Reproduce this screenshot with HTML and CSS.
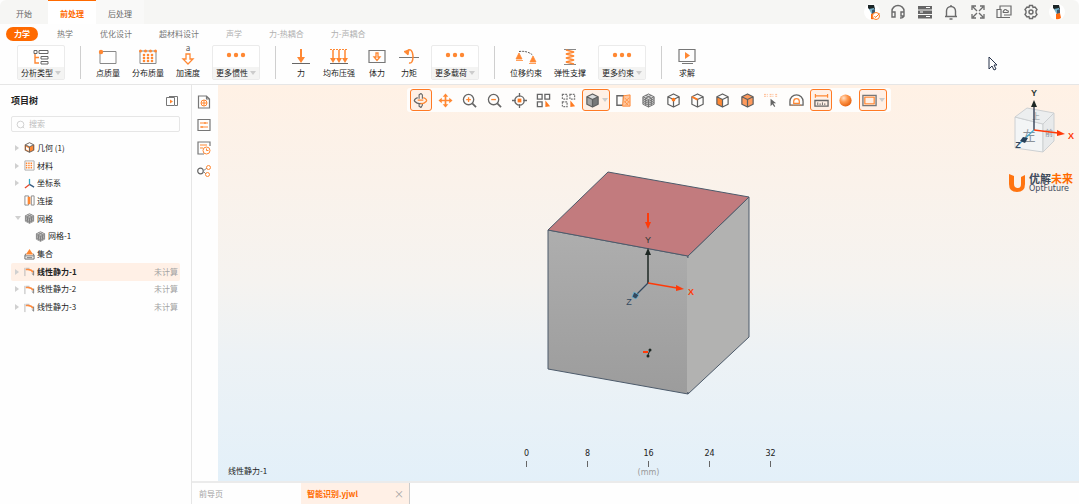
FILE: index.html
```html
<!DOCTYPE html>
<html lang="zh-CN">
<head>
  <meta charset="UTF-8" />
  <meta name="viewport" content="width=device-width, initial-scale=1.0" />
  <title>智能识别.yjwl</title>
  <link rel="stylesheet" href="styles.css">
</head>
<body>
  <svg class="sprite" aria-hidden="true">
    <symbol id="cube" viewBox="0 0 16 16">
      <path d="M8 1l6 3v8l-6 3-6-3V4zM2 4l6 3 6-3M8 7v8" fill="none" stroke="#606060" stroke-width="1.3" stroke-linejoin="round" />
    </symbol>
    <symbol id="mesh" viewBox="0 0 16 16">
      <path d="M8 1l6 3v8l-6 3-6-3V4z" fill="#d8d8d8" />
      <path d="M8 1l6 3v8l-6 3-6-3V4zM2 4l6 3 6-3M8 7v8M2 8l6 3 6-3M5 2.500l6 3V13M11 2.500l-6 3V13M2 10l6 3 6-3M2 6l6 3 6-3" fill="none" stroke="#707070" />
    </symbol>
    <symbol id="static" viewBox="0 0 12 12">
      <path d="M1 2v9M2 2.500h4" fill="none" stroke="#b5b5b5" />
      <path d="M2 4q6-1 8 3" fill="none" stroke="#ff8a3d" stroke-width="1.500" />
      <path d="M10.500 5v5M8.500 8l2 2" fill="none" stroke="#777" />
    </symbol>
    <symbol id="more" viewBox="0 0 20 18">
      <g fill="#ff8833"><circle cx="3" cy="7" r="2.200" /><circle cx="10" cy="7" r="2.200" /><circle cx="17" cy="7" r="2.200" /></g>
    </symbol>
    <symbol id="person" viewBox="0 0 16 16">
      <circle cx="8" cy="8" r="8" fill="#fff" />
      <path d="M4 1h6l1 4-5 1-2-2z" fill="#1b2526" />
      <path d="M5 5l5-1 1 5-3 2z" fill="#78b4cc" />
      <path d="M8 6l3-1v4l-3 1z" fill="#3d5a70" />
      <path d="M7 10l4-1 1 5q-3 2-5 1z" fill="#ff6a10" />
    </symbol>
  </svg>

  <header class="app-header">
    <div class="title-bar">
      <nav class="main-tabs">
        <a href="#">开始</a>
        <a href="#" class="active">前处理</a>
        <a href="#" class="soft">后处理</a>
      </nav>
      <div class="system-tools">
        <button aria-label="账户"><svg viewBox="0 0 16 16"><use href="#person" /><circle cx="12" cy="12" r="3.500" fill="#fff" stroke="#ff7a20" /><path d="M10.500 12l1 1.500 4-4" fill="none" stroke="#ff7a20" /></svg></button>
        <button aria-label="客服"><svg viewBox="0 0 16 16"><path d="M2 8V7a6 5.500 0 0 1 12 0v4q0 3-4 3M2 8h3v5H2zM11 8h3v4h-3z" fill="none" stroke="#6b6b6b" stroke-width="1.400" /></svg></button>
        <button aria-label="任务"><svg viewBox="0 0 16 16"><g fill="#666"><path d="M1 2h14v3.500H1zM1 6.500h14V10H1zM1 11h14v3.500H1z" /></g><path d="M9 3.500h4M3 8h3M9 12.500h4" stroke="#fff" /></svg></button>
        <button aria-label="通知"><svg viewBox="0 0 16 16"><path d="M3.500 12V7a4.500 4.500 0 0 1 9 0v5M2 12.500h12M8 1v2M6.500 15h3" fill="none" stroke="#6b6b6b" stroke-width="1.400" /></svg></button>
        <button aria-label="全屏"><svg viewBox="0 0 16 16"><path d="M2 6V2h4M10 2h4v4M14 10v4h-4M6 14H2v-4M3 3l4 4M13 3L9 7M13 13L9 9M3 13l4-4" fill="none" stroke="#6b6b6b" stroke-width="1.300" /></svg></button>
        <button aria-label="云端"><svg viewBox="0 0 16 16"><path d="M4 5V2h11v9H8M1 5.500h4v8H1zM5 13.500h9M7 8.500h5q1-2-1-2-2-2-3 0-1 1-1 2" fill="none" stroke="#6b6b6b" stroke-width="1.200" /></svg></button>
        <button aria-label="设置"><svg viewBox="0 0 16 16"><path d="M6.500 1.500h3l.5 2 2-.5 2 2.500-1 1.500v2l1 1.500-2 2.500-2-.5-.5 2h-3l-.5-2-2 .5-2-2.500 1-1.500V7l-1-1.500L4 3l2 .5z" fill="none" stroke="#6b6b6b" stroke-width="1.400" /><circle cx="8" cy="8" r="2" fill="none" stroke="#6b6b6b" stroke-width="1.400" /></svg></button>
        <button aria-label="个人中心"><svg viewBox="0 0 16 16"><use href="#person" /></svg></button>
      </div>
    </div>

    <nav class="sub-tabs">
      <a href="#" class="active">力学</a>
      <a href="#">热学</a>
      <a href="#">优化设计</a>
      <a href="#">超材料设计</a>
      <a href="#" class="muted">声学</a>
      <a href="#" class="muted">力-热耦合</a>
      <a href="#" class="muted">力-声耦合</a>
    </nav>

    <div class="ribbon">
      <div class="group">
        <button class="tool boxed">
          <svg viewBox="0 0 18 18"><path d="M3 6v9h4M3 9.500h4" fill="none" stroke="#ff8833" stroke-width="1.400" /><path d="M2 2.500h3v3H2zM7 2.500h9v3H7zM9 8.500h7v2.500H9zM9 13.500h7v2.500H9z" fill="none" stroke="#666" /></svg>
          <span>分析类型<i class="caret"></i></span>
        </button>
      </div>
      <div class="group">
        <button class="tool">
          <svg viewBox="0 0 20 18"><path d="M2 3.500h16v12H2z" fill="none" stroke="#888" /><circle cx="3" cy="4" r="2.200" fill="#ff8833" /></svg>
          <span>点质量</span>
        </button>
        <button class="tool">
          <svg viewBox="0 0 20 18"><path d="M2 3v12.500h16V3z" fill="none" stroke="#888" /><g fill="#ff8833"><circle cx="2.500" cy="3" r="1.500" /><circle cx="7.500" cy="3" r="1.500" /><circle cx="12.500" cy="3" r="1.500" /><circle cx="17.500" cy="3" r="1.500" /><circle cx="6" cy="7" r="1.300" /><circle cx="10" cy="7" r="1.300" /><circle cx="14" cy="7" r="1.300" /><circle cx="6" cy="10" r="1.300" /><circle cx="10" cy="10" r="1.300" /><circle cx="14" cy="10" r="1.300" /><circle cx="6" cy="13" r="1.300" /><circle cx="10" cy="13" r="1.300" /><circle cx="14" cy="13" r="1.300" /></g></svg>
          <span>分布质量</span>
        </button>
        <button class="tool">
          <svg viewBox="0 0 20 18"><text x="10" y="3" font-size="8" text-anchor="middle" fill="#555">a</text><path d="M8 6h4v5h3l-5 5-5-5h3z" fill="#fff" stroke="#ff8833" stroke-width="1.300" /></svg>
          <span>加速度</span>
        </button>
        <button class="tool boxed">
          <svg viewBox="0 0 20 18"><use href="#more" /></svg>
          <span>更多惯性<i class="caret"></i></span>
        </button>
      </div>
      <div class="group">
        <button class="tool">
          <svg viewBox="0 0 20 18"><path d="M10 1v10" stroke="#ff8833" stroke-width="2" /><path d="M6 9h8l-4 6z" fill="#ff8833" /><path d="M1 15.500h18" stroke="#666" /></svg>
          <span>力</span>
        </button>
        <button class="tool">
          <svg viewBox="0 0 20 18"><path d="M1 1.500h18" stroke="#ff8833" stroke-dasharray="2 1" /><path d="M4 2v9M10 2v9M16 2v9" stroke="#ff8833" stroke-width="1.500" /><path d="M1 10h6l-3 5zM7 10h6l-3 5zM13 10h6l-3 5z" fill="#ff8833" /><path d="M1 15.500h18" stroke="#666" /></svg>
          <span>均布压强</span>
        </button>
        <button class="tool">
          <svg viewBox="0 0 20 18"><path d="M2 2.500h16v12H2z" fill="none" stroke="#777" stroke-width="1.200" /><path d="M9 5h2v4h2l-3 3.500L7 9h2z" fill="none" stroke="#ff8833" stroke-width="1.300" /></svg>
          <span>体力</span>
        </button>
        <button class="tool">
          <svg viewBox="0 0 20 18"><path d="M0 9.500h20" stroke="#777" /><path d="M8 3q5-4 6 5 0 8-4 7" fill="none" stroke="#ff8833" stroke-width="1.500" /><path d="M5 3.500l5-1.500-1 5z" fill="#ff8833" stroke="#ff8833" /></svg>
          <span>力矩</span>
        </button>
        <button class="tool boxed">
          <svg viewBox="0 0 20 18"><use href="#more" /></svg>
          <span>更多载荷<i class="caret"></i></span>
        </button>
      </div>
      <div class="group">
        <button class="tool">
          <svg viewBox="0 0 20 18"><path d="M3 3.500q9-1 14 4" fill="none" stroke="#555" stroke-dasharray="2 1" /><path d="M3 5l3 6H0zM17 8l3 6h-6zM0 12.500h7M13 15.500h7" fill="#ff8833" stroke="#ff8833" stroke-width=".8" /></svg>
          <span>位移约束</span>
        </button>
        <button class="tool">
          <svg viewBox="0 0 20 18"><path d="M4 1.500h12M4 16.500h12" stroke="#888" /><path d="M6 2l8 2-8 2 8 2-8 2 8 2-8 2 8 2" fill="none" stroke="#ff8833" stroke-width="1.800" /></svg>
          <span>弹性支撑</span>
        </button>
        <button class="tool boxed">
          <svg viewBox="0 0 20 18"><use href="#more" /></svg>
          <span>更多约束<i class="caret"></i></span>
        </button>
      </div>
      <div class="group">
        <button class="tool">
          <svg viewBox="0 0 20 18"><path d="M2 1.500h16v12H2zM5 15.500h11" fill="none" stroke="#777" stroke-width="1.200" /><path d="M8 4l5 3.500L8 11z" fill="#ff8833" /></svg>
          <span>求解</span>
        </button>
      </div>
    </div>
  </header>

  <div class="workspace">
    <aside class="sidebar">
      <div class="sidebar-title">
        <h2>项目树</h2>
        <button aria-label="收起"><svg viewBox="0 0 12 12"><path d="M.5 2.500h8v8h-8z" fill="none" stroke="#777" /><path d="M3 1.500h8.500v9H9" fill="none" stroke="#777" /><path d="M4 4.500l3 2-3 2z" fill="#ff8833" /></svg></button>
      </div>
      <label class="search">
        <svg viewBox="0 0 12 12"><circle cx="6" cy="6" r="4.500" fill="none" stroke="#c4c4c4" /><path d="M9 9l2 2" stroke="#c4c4c4" /></svg>
        <input type="text" placeholder="搜索" aria-label="搜索" />
      </label>
      <ul class="tree">
        <li><i class="arrow"></i><svg viewBox="0 0 16 16"><path d="M1 4l7-3 7 3v8l-7 3-7-3z" fill="#ff8833" /><path d="M1 4l7 3 7-3-7-3zM3 7l4 2v4l-4-2z" fill="#fff" /><use href="#cube" /></svg><span>几何 (1)</span></li>
        <li><i class="arrow"></i><svg viewBox="0 0 12 12"><path d="M1 1h10v10H1z" fill="none" stroke="#aaa" /><path d="M2 3.500h8M2 6h8M2 8.500h8" stroke="#ff8833" stroke-width="1.500" stroke-dasharray="1.600 1" /></svg><span>材料</span></li>
        <li><i class="arrow"></i><svg viewBox="0 0 12 12"><path d="M6 7V1" stroke="#35a8c8" stroke-width="1.400" /><path d="M6 7l-5 4" stroke="#e8492a" stroke-width="1.400" /><path d="M6 7l5 3" stroke="#335a80" stroke-width="1.400" /></svg><span>坐标系</span></li>
        <li><i class="arrow none"></i><svg viewBox="0 0 12 12"><path d="M1 1h4v10H1zM8 1h3v10H8z" fill="none" stroke="#888" /><path d="M4 2h3v8H4z" fill="#ff8833" /></svg><span>连接</span></li>
        <li><i class="arrow open"></i><svg><use href="#mesh" /></svg><span>网格</span></li>
        <li class="child"><i class="arrow none"></i><svg><use href="#mesh" /></svg><span>网格-1</span></li>
        <li><i class="arrow none"></i><svg viewBox="0 0 12 12"><path d="M6 0l4 6H2z" fill="#ff8833" /><path d="M2 5L1 7v4h10V7l-1-2M1 7.500h10M3 9.500h6" fill="none" stroke="#666" /></svg><span>集合</span></li>
        <li class="selected"><i class="arrow"></i><svg><use href="#static" /></svg><span>线性静力-1</span><em>未计算</em></li>
        <li><i class="arrow"></i><svg><use href="#static" /></svg><span>线性静力-2</span><em>未计算</em></li>
        <li><i class="arrow"></i><svg><use href="#static" /></svg><span>线性静力-3</span><em>未计算</em></li>
      </ul>
    </aside>

    <div class="content">
      <div class="stage">
        <div class="side-tools">
          <button aria-label="属性"><svg viewBox="0 0 14 14"><path d="M1.500 1h8l3 3v9h-11zM9.500 1v3h3" fill="none" stroke="#777" stroke-width="1.200" /><circle cx="7" cy="8" r="3" fill="none" stroke="#ff8833" /><path d="M4 8h6M7 5v6" stroke="#ff8833" /></svg></button>
          <button aria-label="参数"><svg viewBox="0 0 14 14"><path d="M1 1.500h12v11H1z" fill="none" stroke="#777" stroke-width="1.200" /><path d="M3 5h8M3 9h8M8 4v2M5 8v2" stroke="#ff8833" stroke-width="1.200" /></svg></button>
          <button aria-label="历史"><svg viewBox="0 0 14 14"><path d="M7 13H1V1h12v4" fill="none" stroke="#777" stroke-width="1.200" /><path d="M3 4h7M3 7h3" stroke="#ff8833" /><circle cx="9.500" cy="9.500" r="3.500" fill="none" stroke="#ff8833" /><path d="M9.500 7.500v2h2" fill="none" stroke="#ff8833" /></svg></button>
          <button aria-label="关系"><svg viewBox="0 0 14 14"><circle cx="3.500" cy="7" r="2.800" fill="none" stroke="#666" stroke-width="1.200" /><path d="M6 7l4-3M6 7l3 3" stroke="#888" /><circle cx="11.500" cy="3.500" r="2" fill="none" stroke="#ff8833" /><circle cx="10.500" cy="10.500" r="2" fill="none" stroke="#ff8833" /></svg></button>
        </div>

        <main class="viewport">
          <div class="view-tools">
            <button class="on" aria-label="旋转"><svg viewBox="0 0 16 16"><path d="M6.500 6V2l2-1.500L10 2v4M6.500 11v3l2 1.500L10 13v-2" fill="none" stroke="#666" stroke-width="1.200" /><path d="M5 5Q0 7 2 9q3 3 7 2" fill="none" stroke="#666" stroke-width="1.400" /><path d="M11 5q5 2 3 4-3 3-6 2M5 7.500h6" fill="none" stroke="#ff8833" stroke-width="1.400" /></svg></button>
            <button aria-label="平移"><svg viewBox="0 0 16 16"><path d="M8 2v12M2 8h12" stroke="#ff8833" stroke-width="1.800" /><path d="M5 4l3-3.500L11 4zM5 12l3 3.500 3-3.500zM4 5L.5 8 4 11zM12 5l3.500 3-3.500 3z" fill="#ff8833" /></svg></button>
            <button aria-label="放大"><svg viewBox="0 0 16 16"><circle cx="7" cy="7" r="5.500" fill="none" stroke="#666" stroke-width="1.400" /><path d="M11 11l4 4" stroke="#666" stroke-width="1.800" /><path d="M4.500 7h5M7 4.500v5" stroke="#ff8833" stroke-width="1.400" /></svg></button>
            <button aria-label="缩小"><svg viewBox="0 0 16 16"><circle cx="7" cy="7" r="5.500" fill="none" stroke="#666" stroke-width="1.400" /><path d="M11 11l4 4" stroke="#666" stroke-width="1.800" /><path d="M4.500 7h5" stroke="#ff8833" stroke-width="1.400" /></svg></button>
            <button aria-label="适应窗口"><svg viewBox="0 0 16 16"><circle cx="8" cy="8" r="5" fill="none" stroke="#666" stroke-width="1.400" /><path d="M8 0v4M8 12v4M0 8h4M12 8h4" stroke="#666" stroke-width="1.400" /><path d="M6 6h4v4H6z" fill="#ff7a20" /></svg></button>
            <button aria-label="选择"><svg viewBox="0 0 16 16"><path d="M1.500 1.500h5v5h-5zM9.500 1.500h5v5h-5zM1.500 9.500h5v5h-5z" fill="none" stroke="#666" stroke-width="1.400" /><path d="M10 8v7l5-1z" fill="#ff7a20" /></svg></button>
            <button aria-label="框选"><svg viewBox="0 0 16 16"><path d="M1.500 1.500h5v5h-5zM9.500 1.500h5v5h-5zM1.500 9.500h5v5h-5z" fill="none" stroke="#777" stroke-width="1.300" stroke-dasharray="2 1" /><path d="M10 8v7l5-1z" fill="#ff7a20" /></svg></button>
            <button class="on wide" aria-label="显示模式"><svg viewBox="0 0 16 16"><path d="M8 1l6 3v8l-6 3-6-3V4z" fill="#a5a5a5" /><path d="M2 4l6-3 6 3-6 3z" fill="#dcdcdc" /><path d="M8 7l6-3v8l-6 3z" fill="#777" /><use href="#cube" /></svg><i class="caret"></i></button>
            <button aria-label="剖切"><svg viewBox="0 0 16 16"><path d="M1 3h7v10H1z" fill="none" stroke="#666" stroke-width="1.500" /><path d="M8 3l7-1v12H7z" fill="#ffc69e" stroke="#ff8833" /><path d="M9 5l5 5M9 9l4 4M14 5l-5 5M14 9l-4 4" stroke="#ff8833" stroke-width=".8" /></svg></button>
            <button aria-label="网格显示"><svg><use href="#mesh" /></svg></button>
            <button aria-label="点选"><svg viewBox="0 0 16 16"><use href="#cube" /><circle cx="8" cy="7" r="2" fill="#ff7a20" /></svg></button>
            <button aria-label="线选"><svg viewBox="0 0 16 16"><use href="#cube" /><path d="M2 4l6 3" stroke="#ff7a20" stroke-width="2" /></svg></button>
            <button aria-label="面选"><svg viewBox="0 0 16 16"><path d="M2 4l6 3v8l-6-3z" fill="#ff8833" /><use href="#cube" /></svg></button>
            <button aria-label="体选"><svg viewBox="0 0 16 16"><path d="M8 1l6 3v8l-6 3-6-3V4z" fill="#ff9a5c" /><use href="#cube" /></svg></button>
            <button aria-label="坐标拾取"><svg viewBox="0 0 16 16"><path d="M0 1.500h15M0 3.500h15" stroke="#ffb68a" stroke-dasharray="2 1 1 2" /><path d="M7 6v8l2-2 2 3 1-1-2-3h3z" fill="#666" /></svg></button>
            <button aria-label="量角"><svg viewBox="0 0 16 16"><path d="M1 13V9a7 7 0 0 1 14 0v4z" fill="none" stroke="#666" stroke-width="1.400" /><path d="M5 11V9a3 3 0 0 1 6 0v2z" fill="none" stroke="#ff8833" stroke-width="1.300" /><path d="M2 13h12" stroke="#ff8833" stroke-dasharray="1 1" /></svg></button>
            <button class="on" aria-label="标尺"><svg viewBox="0 0 16 16"><path d="M1 3h14M1.500 1v4M14.500 1v4" stroke="#ff8833" stroke-width="1.300" /><path d="M1 8h14v6H1z" fill="none" stroke="#666" stroke-width="1.400" /><path d="M4 10v3M6.500 11v2M9 10v3M11.500 11v2" stroke="#666" /></svg></button>
            <button aria-label="渲染"><svg viewBox="0 0 16 16"><defs><radialGradient id="ball" cx=".35" cy=".3" r=".8"><stop offset="0" stop-color="#ffe0c8" /><stop offset=".4" stop-color="#ff9a50" /><stop offset="1" stop-color="#e05500" /></radialGradient></defs><circle cx="8" cy="8" r="6.500" fill="url(#ball)" /></svg></button>
            <button class="on wide" aria-label="背景"><svg viewBox="0 0 16 16"><path d="M1 2.500h14v11H1z" fill="#fff" stroke="#777" stroke-width="1.500" /><path d="M3 4.500h10v7H3z" fill="#fff0e4" stroke="#ff8833" stroke-width="1.300" /></svg><i class="caret"></i></button>
          </div>

          <div class="scene">
            <svg class="model" width="206" height="225" viewBox="0 0 206 225">
              <defs>
                <linearGradient id="front" x1="0" y1="0" x2="0" y2="1"><stop offset="0" stop-color="#aeaeae" /><stop offset="1" stop-color="#9c9c9c" /></linearGradient>
              </defs>
              <g stroke="#4d5b6b" stroke-linejoin="round">
                <path d="M2 59l140 26v138L2 198z" fill="url(#front)" />
                <path d="M142 85l61-59v140l-61 57z" fill="#b2b2b1" />
                <path d="M2 59L62 1l141 25-61 59z" fill="#c27b7e" />
              </g>
              <path d="M142 87v134" stroke="#b2b2b1" stroke-width="2" />
              <path d="M102 42v11" stroke="#ff3a08" stroke-width="2" />
              <path d="M99 51h6l-3 7z" fill="#ff3a08" />
              <path d="M102 112V82" stroke="#1d2723" stroke-width="1.500" />
              <path d="M99 84l3-7 3 7z" fill="#1d2723" />
              <path d="M102 112l29 5" stroke="#ff3a08" stroke-width="1.500" />
              <path d="M130 114l8 4-8 2z" fill="#ff3a08" />
              <path d="M102 112l-13 13" stroke="#34495e" stroke-width="1.300" />
              <path d="M86 126l2-5 5 3-3 4z" fill="#34495e" stroke="#67b5d5" stroke-width=".8" />
              <path d="M97 181h5" stroke="#ff3a08" stroke-width="2" />
              <path d="M102 184l2-5" stroke="#1d2723" />
              <circle cx="104" cy="179" r="1.500" fill="#1d2723" />
              <circle cx="102" cy="185" r="1.500" fill="#1d2723" />
              <g class="axis-text">
                <text x="102" y="72" fill="#2b3632">Y</text>
                <text x="145" y="124" fill="#ff3a08" font-weight="bold">X</text>
                <text x="83" y="134" fill="#34495e">Z</text>
              </g>
            </svg>
          </div>

          <div class="ruler">
            <ol>
              <li>0</li>
              <li>8</li>
              <li>16</li>
              <li>24</li>
              <li>32</li>
            </ol>
            <p>(mm)</p>
          </div>

          <div class="orientation">
            <svg width="74" height="72" viewBox="0 0 74 72">
              <g stroke="#cdd0d2" stroke-linejoin="round">
                <path d="M10 29l28 7v28l-28-4z" fill="#f3f5f6" />
                <path d="M38 36l11-11v28L38 64z" fill="#e8eaeb" />
                <path d="M10 29l12-9 27 5-11 11z" fill="#eceeef" />
              </g>
              <g class="face-text">
                <text x="24" y="52" font-size="13">左</text>
                <text x="31" y="31" font-size="8">上</text>
                <text x="44" y="48" font-size="8">前</text>
              </g>
              <path d="M29 42V18" stroke="#26324a" stroke-width="1.300" />
              <path d="M26 19l3-7 3 7z" fill="#1d2723" />
              <path d="M29 42l24 3" stroke="#ff3a08" stroke-width="1.300" />
              <path d="M52 42l8 4-8 2z" fill="#ff3a08" />
              <path d="M29 42L14 56" stroke="#4aa8cc" stroke-width="1.300" />
              <path d="M15 53l3-4 5 1-3 5z" fill="#26405a" />
              <g class="axis-text">
                <text x="29" y="8" fill="#2b3632" font-weight="bold">Y</text>
                <text x="66" y="51" fill="#ff3a08" font-weight="bold">X</text>
                <text x="13" y="60" fill="#34495e" font-weight="bold">Z</text>
              </g>
            </svg>
            <div class="brand">
              <svg width="17" height="18" viewBox="0 0 17 18"><path d="M0 0l5 2v8q0 4 4 4 3 0 3-4V3l4-2v9q0 8-8 8-8 0-8-8z" fill="#ff7410" /></svg>
              <p><b>优解<span>未来</span></b><small>OptFuture</small></p>
            </div>
          </div>
          <p class="case-name">线性静力-1</p>
        </main>
      </div>

      <nav class="file-tabs">
        <a href="#">前导页</a>
        <div class="file active"><a href="#">智能识别.yjwl</a><button aria-label="关闭">×</button></div>
      </nav>
    </div>
  </div>

  <svg class="cursor" viewBox="0 0 10 15"><path d="M1 1v12l3-3 2 4 2-1-2-4h3z" fill="#fff" stroke="#26324a" /></svg>
</body>
</html>
```

FILE: styles.css
```css
:root {
  --accent: #ff6a00;
  --accent-soft: #fff0e6;
  --text: #222222;
  --text-mid: #666666;
  --text-light: #a3a3a3;
  --line: #e6e6e6;
  --bar: #f6f6f4;
}

* {
  box-sizing: border-box;
}

body {
  margin: 0;
  height: 100vh;
  display: flex;
  flex-direction: column;
  overflow: hidden;
  background: #fefefe;
  color: var(--text);
  font: 8px/10px "Noto Sans CJK SC", sans-serif;
}

a {
  color: inherit;
  text-decoration: none;
}

button {
  padding: 0;
  border: 0;
  background: none;
  color: inherit;
  font: inherit;
  cursor: pointer;
}

svg {
  display: block;
  flex: none;
}

p, ul, ol, h2 {
  margin: 0;
  padding: 0;
  list-style: none;
}

.sprite {
  position: absolute;
  width: 0;
  height: 0;
}

.caret {
  border: 3px solid transparent;
  border-top: 4px solid #cccccc;
  border-bottom: 0;
}

/* header */
.app-header {
  border-bottom: 1px solid var(--line);
}

.title-bar {
  display: flex;
  justify-content: space-between;
  align-items: center;
  height: 24px;
  padding-right: 14px;
  background: var(--bar);
  border-radius: 6px 6px 0 0;
}

.main-tabs {
  display: flex;
  height: 100%;
}

.main-tabs a {
  display: flex;
  align-items: center;
  justify-content: center;
  width: 48px;
  padding-top: 3px;
  color: var(--text-mid);
}

.main-tabs .active {
  background: #fff;
  color: var(--accent);
  font-weight: bold;
  padding-top: 2px;
  border-top: 1px solid var(--accent);
}

.main-tabs .soft {
  background: #f9f9f8;
}

.system-tools {
  display: flex;
  justify-content: space-between;
  width: 201px;
}

.system-tools svg {
  width: 16px;
  height: 16px;
}

.sub-tabs {
  display: flex;
  align-items: center;
  gap: 11px;
  height: 20px;
  padding-left: 6px;
  color: #777;
}

.sub-tabs a {
  padding: 2px 8px;
  border-radius: 7px;
}

.sub-tabs .muted {
  color: #b0b0b0;
}

.sub-tabs .active {
  background: var(--accent);
  color: #fff;
  font-weight: bold;
}

.ribbon {
  display: flex;
  padding: 1px 17px 4px;
}

.group {
  display: flex;
  gap: 12px;
}

.group + .group::before {
  content: "";
  width: 1px;
  margin: 1px 3px 1px 15px;
  background: #cfcfcf;
}

.tool {
  display: grid;
  grid-template-rows: 21px 12px;
  justify-items: center;
  align-items: center;
  min-width: 20px;
  padding: 1px 0;
}

.tool svg {
  width: 20px;
  height: 18px;
  overflow: visible;
}

.tool span {
  display: flex;
  align-items: center;
  justify-content: center;
  gap: 2px;
  width: 100%;
  height: 12px;
  white-space: nowrap;
}

.boxed {
  width: 48px;
  padding: 0;
  border: 1px solid #ebebeb;
  border-radius: 2px;
  background: #fff;
}

.boxed span {
  background: #f4f4f3;
}

/* project tree */
.workspace {
  display: flex;
  flex: 1;
  min-height: 0;
}

.sidebar {
  width: 192px;
  padding: 10px 11px 0;
  border-right: 1px solid var(--line);
}

.sidebar-title {
  display: flex;
  align-items: center;
  justify-content: space-between;
  padding-right: 2px;
}

.sidebar-title h2 {
  font-size: 9px;
  line-height: 12px;
}

.sidebar-title svg {
  width: 12px;
  height: 12px;
}

.search {
  display: flex;
  align-items: center;
  gap: 4px;
  height: 16px;
  margin: 9px 0 7px;
  padding-left: 4px;
  border: 1px solid var(--line);
  border-radius: 2px;
}

.search svg {
  width: 9px;
  height: 9px;
}

.search input {
  flex: 1;
  min-width: 0;
  padding: 0;
  border: 0;
  outline: none;
  background: none;
  font: inherit;
}

.search input::placeholder {
  color: #bdbdbd;
}

.tree {
  display: grid;
  grid-auto-rows: 1fr;
  height: 177px;
}

.tree li {
  display: flex;
  align-items: center;
  padding: 0 2px 0 4px;
  border-radius: 2px;
}

.tree svg {
  width: 11px;
  height: 11px;
  margin-right: 2px;
}

.tree .child {
  padding-left: 15px;
}

.tree .selected {
  background: var(--accent-soft);
}

.tree .selected span {
  font-weight: bold;
}

.tree em {
  margin-left: auto;
  color: var(--text-light);
  font-style: normal;
}

.arrow {
  width: 9px;
  height: 6px;
}

.arrow::before {
  content: "";
  display: block;
  width: 0;
  border: 3px solid transparent;
  border-left: 4px solid #d0d0d0;
  border-right: 0;
}

.arrow.open::before {
  border: 3px solid transparent;
  border-top: 4px solid #d0d0d0;
  border-bottom: 0;
}

.arrow.none {
  visibility: hidden;
}

/* 3D view */
.content {
  flex: 1;
  display: flex;
  flex-direction: column;
  min-width: 0;
}

.stage {
  flex: 1;
  display: flex;
  min-height: 0;
}

.side-tools {
  display: flex;
  flex-direction: column;
  align-items: center;
  gap: 9px;
  width: 26px;
  padding: 10px 3px 0 0;
}

.side-tools svg {
  width: 14px;
  height: 14px;
}

.viewport {
  position: relative;
  flex: 1;
  display: flex;
  flex-direction: column;
  align-items: center;
  min-width: 0;
  background: linear-gradient(#fff1e5, #f5f3f0 50%, #edf2f5 68%, #e3f0f9);
}

.view-tools {
  display: flex;
  align-items: center;
  justify-content: space-between;
  width: 484px;
  height: 24px;
  margin: 3px 0 5px;
  padding: 0 3px;
  border-radius: 3px;
  background: #fefdfc;
}

.view-tools button {
  display: flex;
  align-items: center;
  justify-content: center;
  gap: 2px;
  width: 22px;
  height: 22px;
  border: 1px solid transparent;
  border-radius: 3px;
}

.view-tools .wide {
  width: 28px;
}

.view-tools .on {
  border-color: #ff7a24;
  background: var(--accent-soft);
}

.view-tools svg {
  width: 15px;
  height: 15px;
}

.scene {
  flex: 1;
  display: flex;
  align-items: center;
}

.axis-text {
  font: 9px "Liberation Sans", sans-serif;
  text-anchor: middle;
}

.ruler {
  padding-bottom: 3px;
  text-align: center;
  font-family: "DejaVu Sans", sans-serif;
}

.ruler ol {
  display: grid;
  grid-template-columns: repeat(5, 61px);
}

.ruler li::after {
  content: "";
  display: block;
  width: 1px;
  height: 6px;
  margin: 2px auto 1px;
  background: #666;
}

.ruler p {
  color: #999;
}

.orientation {
  position: absolute;
  top: 3px;
  right: 0;
}

.face-text {
  fill: #8b9299;
  text-anchor: middle;
}

.brand {
  display: flex;
  align-items: center;
  gap: 3px;
  margin: 12px 0 0 4px;
}

.brand p {
  display: flex;
  flex-direction: column;
}

.brand b {
  font-size: 11px;
  line-height: 12px;
  color: #3e4a5c;
}

.brand span {
  color: var(--accent);
}

.brand small {
  font: 8px/10px "DejaVu Sans", sans-serif;
  color: #3e4a5c;
}

.case-name {
  position: absolute;
  left: 10px;
  bottom: 5px;
}

/* open files */
.file-tabs {
  display: flex;
  align-items: stretch;
  height: 23px;
  border-top: 2px solid #ebebeb;
  color: var(--text-light);
}

.file-tabs > a {
  display: flex;
  align-items: center;
  width: 109px;
  padding-left: 7px;
}

.file {
  display: flex;
  align-items: center;
  justify-content: space-between;
  width: 109px;
  padding: 0 5px 0 6px;
  border-right: 1px solid #ccc;
  background: var(--accent-soft);
}

.file a {
  color: var(--accent);
  font-weight: bold;
}

.file button {
  font-size: 10px;
}

.cursor {
  position: absolute;
  top: 56px;
  left: 988px;
  width: 10px;
  height: 15px;
}
```
